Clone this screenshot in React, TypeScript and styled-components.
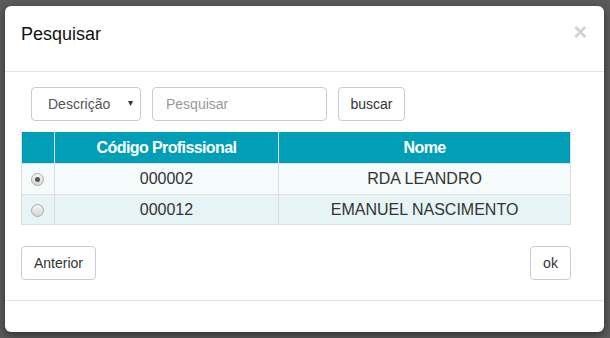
import React, { useState } from 'react'
import styled, { createGlobalStyle } from 'styled-components'

const GlobalStyle = createGlobalStyle`
  html, body {
    margin: 0;
    padding: 0;
    background: #5b5b5b;
    font-family: "Liberation Sans", Arial, sans-serif;
  }
`

const Backdrop = styled.div`
  width: 610px;
  height: 338px;
  padding: 6px 0 0 5px;
  box-sizing: border-box;
  background: #5b5b5b;
  overflow: hidden;
`

const Modal = styled.div`
  width: 599px;
  background: #fff;
  border-radius: 6px;
  box-shadow: 0 3px 9px rgba(0, 0, 0, 0.5);
`

const Header = styled.div`
  height: 65px;
  box-sizing: content-box;
  padding: 0 16px;
  display: flex;
  align-items: flex-start;
  justify-content: space-between;
  border-bottom: 1px solid #e5e5e5;
`

const Title = styled.h4`
  margin: 18px 0 0;
  font-size: 18px;
  line-height: 20px;
  font-weight: 400;
  color: #111;
`

const Close = styled.span`
  margin: 15px 1px 0 0;
  font-size: 23px;
  font-weight: 700;
  color: #d2d2d2;
  line-height: 1;
`

const Body = styled.div`
  padding: 15px 16px 20px;
`

const SearchRow = styled.div`
  display: flex;
  align-items: center;
  margin-left: 10px;
  margin-bottom: 11px;
`

const Field = styled.div<{ $w: number }>`
  width: ${(p) => p.$w}px;
  height: 34px;
  box-sizing: border-box;
  border: 1px solid #ccc;
  border-radius: 4px;
  display: flex;
  align-items: center;
  padding: 0 7px 0 16px;
  font-size: 14px;
  color: #555;
  margin-right: 11px;
`

const Caret = styled.span`
  margin-left: auto;
  font-size: 10px;
  color: #333;
  transform: translateY(-2px);
`

const Placeholder = styled.span`
  color: #999;
  margin-left: -3px;
`

const Button = styled.button<{ $w: number }>`
  width: ${(p) => p.$w}px;
  height: 34px;
  box-sizing: border-box;
  border: 1px solid #ccc;
  border-radius: 4px;
  background: #fff;
  font-family: inherit;
  font-size: 14px;
  color: #333;
  padding: 0;
`

const Table = styled.table`
  width: 550px;
  border-collapse: collapse;
  font-size: 16px;
  color: #333;
`

const Th = styled.th<{ $w: number }>`
  width: ${(p) => p.$w}px;
  height: 31px;
  padding: 0;
  background: #009fb7;
  color: #fff;
  font-weight: 700;
  font-size: 16px;
  letter-spacing: -0.6px;
  border: 1px solid #ddd;
  border-top: 0;
  border-bottom: 0;
`

const Row = styled.tr<{ $odd: boolean }>`
  background: ${(p) => (p.$odd ? '#f5fbfb' : '#e7f4f5')};
`

const Td = styled.td<{ $h: number }>`
  height: ${(p) => p.$h}px;
  padding: 0;
  text-align: center;
  border: 1px solid #ddd;
`

const Radio = styled.span<{ $checked: boolean }>`
  display: inline-flex;
  align-items: center;
  justify-content: center;
  width: 11px;
  height: 11px;
  border-radius: 50%;
  border: 1px solid #aaa;
  background: linear-gradient(#f4f4f4, #d6d6d6);
  vertical-align: middle;
  &::after {
    content: '';
    display: ${(p) => (p.$checked ? 'block' : 'none')};
    width: 5px;
    height: 5px;
    border-radius: 50%;
    background: #555;
  }
`

const Actions = styled.div`
  width: 550px;
  display: flex;
  justify-content: space-between;
  margin-top: 21px;
`

const Footer = styled.div`
  height: 31px;
  border-top: 1px solid #e5e5e5;
`

const rows = [
  { code: '000002', name: 'RDA LEANDRO' },
  { code: '000012', name: 'EMANUEL NASCIMENTO' }
]

const App = () => {
  const [selected, setSelected] = useState(0)

  return (
    <>
      <GlobalStyle />
      <Backdrop>
        <Modal>
          <Header>
            <Title>Pesquisar</Title>
            <Close>×</Close>
          </Header>
          <Body>
            <SearchRow>
              <Field $w={110}>
                Descrição
                <Caret>▾</Caret>
              </Field>
              <Field $w={175}>
                <Placeholder>Pesquisar</Placeholder>
              </Field>
              <Button $w={67}>buscar</Button>
            </SearchRow>
            <Table>
              <thead>
                <tr>
                  <Th $w={32} />
                  <Th $w={225}>Código Profissional</Th>
                  <Th $w={293}>Nome</Th>
                </tr>
              </thead>
              <tbody>
                {rows.map((r, idx) => (
                  <Row key={r.code} $odd={idx % 2 === 0} onClick={() => setSelected(idx)}>
                    <Td $h={idx === 0 ? 30 : 29}>
                      <Radio $checked={selected === idx} />
                    </Td>
                    <Td $h={idx === 0 ? 30 : 29}>{r.code}</Td>
                    <Td $h={idx === 0 ? 30 : 29}>{r.name}</Td>
                  </Row>
                ))}
              </tbody>
            </Table>
            <Actions>
              <Button $w={75}>Anterior</Button>
              <Button $w={41}>ok</Button>
            </Actions>
          </Body>
          <Footer />
        </Modal>
      </Backdrop>
    </>
  )
}

export default App
